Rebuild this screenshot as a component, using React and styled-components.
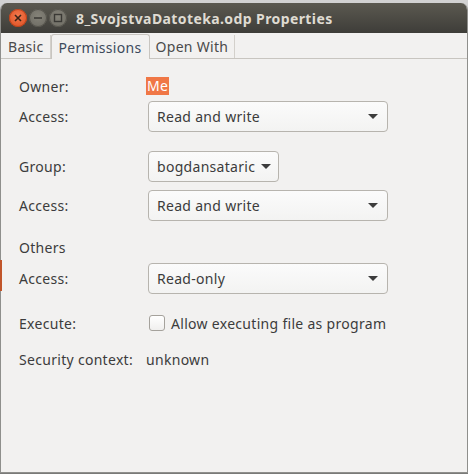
import React from "react";
import styled, { createGlobalStyle } from "styled-components";

const GlobalStyle = createGlobalStyle`
  html, body {
    margin: 0;
    padding: 0;
    background: #cfcfcf;
    width: 468px;
    height: 474px;
    overflow: hidden;
  }
  body {
    font-family: "Noto Sans", "DejaVu Sans", sans-serif;
  }
`;

const Page = styled.div`
  position: relative;
  padding-top: 3px;
  height: 474px;
  box-sizing: border-box;
  background: linear-gradient(#d2d2d2, #c4c4c4);

  /* a piece of the desktop peeking out left of the window */
  &::before {
    content: "";
    position: absolute;
    left: 0;
    top: 260px;
    width: 2px;
    height: 31px;
    background: #c1552a;
    z-index: 2;
  }
`;

const Window = styled.div`
  display: flex;
  flex-direction: column;
  height: 469px;
  border-radius: 7px 7px 0 0;
  background: #f2f1f0;
  border: 1px solid #8f8f8c;
  border-top: none;
  box-shadow: 0 2px 0 #7a7a78;
  overflow: hidden;
`;

const TitleBar = styled.div`
  display: flex;
  align-items: center;
  height: 30px;
  padding-left: 8px;
  background: linear-gradient(#5b5950, #3e3d39);
  flex-shrink: 0;
`;

const Buttons = styled.div`
  display: flex;
  gap: 2px;
  margin-right: 9px;
`;

const CircleButton = styled.div`
  width: 18px;
  height: 18px;
  border-radius: 50%;
  display: flex;
  align-items: center;
  justify-content: center;
  background: ${(p) =>
    p.$close
      ? "radial-gradient(circle at 50% 40%, #f27a4f, #dc4a1c)"
      : "radial-gradient(circle at 50% 40%, #858379, #6a6860)"};
  box-shadow: inset 0 0 0 1px ${(p) => (p.$close ? "#b8421c" : "#55534c")};
`;

const Title = styled.div`
  color: #dfdbd2;
  font-weight: bold;
  font-size: 14px;
  letter-spacing: 0.4px;
`;

const TabBar = styled.div`
  display: flex;
  align-items: flex-end;
  height: 25px;
  padding-left: 1px;
  border-bottom: 1px solid #c8c5c0;
  flex-shrink: 0;
`;

const Tab = styled.div`
  box-sizing: border-box;
  display: flex;
  align-items: center;
  padding: 0 ${(p) => (p.$active ? "7px" : "6px")};
  font-size: 14px;
  letter-spacing: 0.3px;
  color: ${(p) => (p.$active ? "#3c4a5c" : "#4a4a4a")};
  background: #f2f1f0;
  border-right: 1px solid #d3d0cb;
  margin-bottom: ${(p) => (p.$active ? "-1px" : "0")};
  height: ${(p) => (p.$active ? "25px" : "23px")};
  ${(p) =>
    p.$active &&
    `
    border: 1px solid #c8c5c0;
    border-bottom: none;
    border-radius: 3px 3px 0 0;
  `}
`;

const Content = styled.div`
  padding: 18px 0 0 18px;
  display: flex;
  flex-direction: column;
  color: #3c3c3c;
  font-size: 14px;
  letter-spacing: 0.3px;
`;

const Row = styled.div`
  display: flex;
  align-items: center;
  height: ${(p) => p.$h || 18}px;
  margin-top: ${(p) => p.$top || 0}px;
`;

const Label = styled.div`
  width: 127px;
  flex-shrink: 0;
`;

const Highlight = styled.span`
  background: #f07746;
  color: #fff;
  padding: 0 1px;
  line-height: 18px;
`;

const Combo = styled.div`
  width: ${(p) => p.$w}px;
  height: 31px;
  box-sizing: border-box;
  display: flex;
  align-items: center;
  justify-content: space-between;
  padding: 0 9px 0 8px;
  border: 1px solid #b7b4ae;
  border-radius: 4px;
  background: linear-gradient(#fbfbfb, #f3f3f2);
  color: #3c3c3c;
  margin-left: 2px;
`;

const Arrow = styled.span`
  width: 0;
  height: 0;
  border-left: 5px solid transparent;
  border-right: 5px solid transparent;
  border-top: 5px solid #3c3c3c;
  margin-left: 6px;
`;

const CheckBox = styled.span`
  width: 14px;
  height: 14px;
  border: 1px solid #a5a29c;
  border-radius: 3px;
  background: linear-gradient(#ffffff, #f0efee);
  margin: 0 6px 0 3px;
`;

export default function App() {
  return (
    <Page>
      <GlobalStyle />
      <Window>
        <TitleBar>
          <Buttons>
            <CircleButton $close>
              <svg width="8" height="8" viewBox="0 0 8 8">
                <path d="M1 1L7 7M7 1L1 7" stroke="#3a2418" strokeWidth="1.6" />
              </svg>
            </CircleButton>
            <CircleButton>
              <svg width="10" height="4" viewBox="0 0 10 4">
                <path d="M1 2H9" stroke="#3a3935" strokeWidth="1.6" />
              </svg>
            </CircleButton>
            <CircleButton>
              <svg width="10" height="10" viewBox="0 0 10 10">
                <rect x="1.5" y="1.5" width="7" height="7" fill="none" stroke="#3a3935" strokeWidth="1.4" />
              </svg>
            </CircleButton>
          </Buttons>
          <Title>8_SvojstvaDatoteka.odp Properties</Title>
        </TitleBar>
        <TabBar>
          <Tab>Basic</Tab>
          <Tab $active>Permissions</Tab>
          <Tab>Open With</Tab>
        </TabBar>
        <Content>
          <Row>
            <Label>Owner:</Label>
            <Highlight>Me</Highlight>
          </Row>
          <Row $h={31} $top={6}>
            <Label>Access:</Label>
            <Combo $w={240}>
              Read and write
              <Arrow />
            </Combo>
          </Row>
          <Row $h={31} $top={19}>
            <Label>Group:</Label>
            <Combo $w={131}>
              bogdansataric
              <Arrow />
            </Combo>
          </Row>
          <Row $h={31} $top={8}>
            <Label>Access:</Label>
            <Combo $w={240}>
              Read and write
              <Arrow />
            </Combo>
          </Row>
          <Row $top={17}>
            <Label>Others</Label>
          </Row>
          <Row $h={31} $top={7}>
            <Label>Access:</Label>
            <Combo $w={240}>
              Read-only
              <Arrow />
            </Combo>
          </Row>
          <Row $top={20}>
            <Label>Execute:</Label>
            <CheckBox />
            Allow executing file as program
          </Row>
          <Row $top={18}>
            <Label>Security context:</Label>
            unknown
          </Row>
        </Content>
      </Window>
    </Page>
  );
}
